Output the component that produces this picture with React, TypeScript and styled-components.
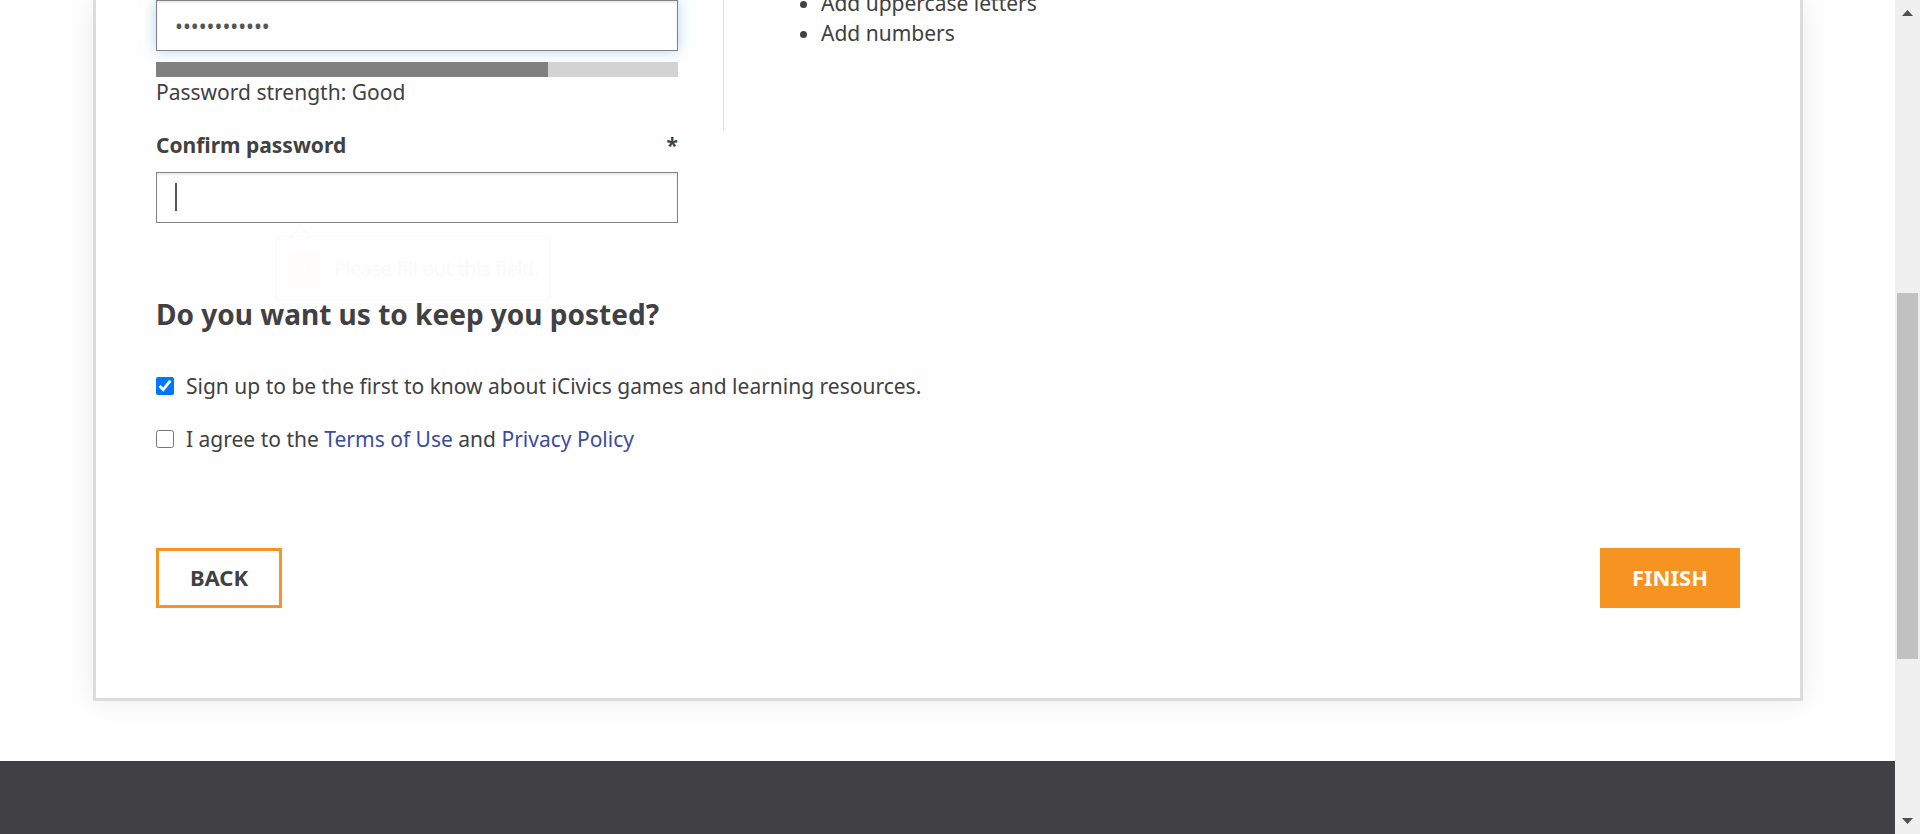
import React, { useState } from "react";
import styled, { createGlobalStyle } from "styled-components";

const GlobalStyle = createGlobalStyle`
  *, *::before, *::after { box-sizing: border-box; }
  body {
    margin: 0;
    overflow: hidden;
    background: #fefefe;
    color: #414042;
    font-family: "Noto Sans", sans-serif;
    font-size: 21px;
    line-height: 30px;
  }
`;

const Shell = styled.div`
  display: flex;
  height: 100vh;
  overflow: hidden;
`;

const Page = styled.div`
  flex: 1;
  min-width: 0;
  display: flex;
  flex-direction: column;
`;

const Card = styled.main`
  margin: 0 92px 60px 93px;
  padding: 0 60px 90px;
  border: 3px solid #dcdcdc;
  border-top: 0;
  background: #fefefe;
  box-shadow: 0 0 24px rgba(0, 0, 0, 0.08);
`;

const Columns = styled.div`
  display: grid;
  grid-template-columns: minmax(0, 522px) 1fr;
  column-gap: 45px;
  align-items: start;
`;

const Tips = styled.aside`
  height: 130px;
  padding-left: 72px;
  border-left: 1px solid #dcdcdc;
`;

const TipList = styled.ul`
  margin: -12px 0 0;
  padding-left: 25px;
`;

const FieldBox = styled.div`
  position: relative;
`;

const TextInput = styled.input<{ $glow?: boolean }>`
  display: block;
  width: 100%;
  height: 51px;
  padding: 0 18px;
  border: 1px solid #808285;
  border-radius: 0;
  outline: 0;
  background: #fefefe;
  color: #555;
  caret-color: transparent;
  font: inherit;
  box-shadow: inset 0 2px 2px rgba(0, 0, 0, 0.08)
    ${(p) => (p.$glow ? ", 0 0 12px rgba(102, 175, 233, 0.5)" : "")};
`;

const Caret = styled.span`
  position: absolute;
  left: 19px;
  top: 11px;
  width: 2px;
  height: 28px;
  background: #555;
`;

const Meter = styled.div`
  height: 15px;
  margin-top: 11px;
  background: #d3d3d3;
`;

const MeterFill = styled.div`
  height: 100%;
  background: #808080;
`;

const FieldLabel = styled.label`
  display: flex;
  justify-content: space-between;
  margin: 23px 0 12px;
  font-weight: 700;
`;

const Bubble = styled.div`
  position: absolute;
  left: 120px;
  top: 64px;
  width: 274px;
  height: 65px;
  display: flex;
  align-items: center;
  gap: 13px;
  padding: 0 12px;
  border: 1px solid #000;
  border-radius: 4px;
  font-size: 19px;
  white-space: nowrap;
  opacity: 0.015;
  &::before {
    content: "";
    position: absolute;
    left: 16px;
    top: -8px;
    width: 15px;
    height: 15px;
    border: solid #000;
    border-width: 1px 0 0 1px;
    transform: rotate(45deg);
  }
`;

const BubbleIcon = styled.span`
  flex: none;
  display: grid;
  place-items: center;
  width: 32px;
  height: 38px;
  background: #ffd800;
  color: #fff;
  font-weight: 700;
`;

const Heading = styled.h2`
  margin: 73px 0 39px;
  font-size: 28px;
  line-height: 36px;
  font-weight: 700;
`;

const CheckRow = styled.div`
  display: flex;
  align-items: center;
  gap: 12px;
  margin-bottom: 23px;
`;

const CheckBox = styled.input`
  width: 18px;
  height: 18px;
  margin: 0;
  accent-color: #0075ff;
`;

const TextLink = styled.a`
  color: #3c4c9b;
  text-decoration: none;
`;

const Actions = styled.div`
  display: flex;
  justify-content: space-between;
  margin-top: 94px;
`;

const ActionButton = styled.button<{ $primary?: boolean }>`
  min-width: ${(p) => (p.$primary ? 140 : 126)}px;
  height: 60px;
  padding: 0 28px 2px;
  border: 3px solid #f79320;
  border-radius: 0;
  background: ${(p) => (p.$primary ? "#f79320" : "#fefefe")};
  color: ${(p) => (p.$primary ? "#fff" : "#414042")};
  font: 700 22px/30px "Noto Sans", sans-serif;
`;

const Footer = styled.footer`
  flex: 1;
  background: #414042;
`;

const ScrollTrack = styled.div`
  width: 25px;
  height: 100vh;
  padding: 10px 2px;
  display: flex;
  flex-direction: column;
  align-items: center;
  background: #f0f0f0;
`;

const ScrollThumb = styled.div`
  width: 21px;
  background: #c1c1c1;
`;

const Arrow = ({ down }: { down?: boolean }) => (
  <svg width="11" height="6" viewBox="0 0 11 6" aria-hidden="true">
    <path d={down ? "M0 0H11L5.5 6Z" : "M0 6H11L5.5 0Z"} fill="#505050" />
  </svg>
);

const Rail = styled.div`
  flex: 1;
  display: grid;
  grid-template-rows: 277fr 366fr 159fr;
  & > :first-child {
    grid-row: 2;
  }
`;

export default function App() {
  const [news, setNews] = useState(true);
  const [agree, setAgree] = useState(false);
  const strength = 75;

  return (
    <>
      <GlobalStyle />
      <Shell>
        <Page>
          <Card>
            <Columns>
              <div>
                <TextInput type="password" aria-label="Password" defaultValue="Civics2024ab" $glow />
                <Meter>
                  <MeterFill style={{ width: `${strength}%` }} />
                </Meter>
                <div>Password strength: Good</div>
                <FieldLabel htmlFor="confirm">
                  <span>Confirm password</span>
                  <span>*</span>
                </FieldLabel>
                <FieldBox>
                  <TextInput id="confirm" type="password" />
                  <Caret />
                  <Bubble>
                    <BubbleIcon>!</BubbleIcon>
                    Please fill out this field.
                  </Bubble>
                </FieldBox>
              </div>
              <Tips>
                <TipList>
                  <li>Add uppercase letters</li>
                  <li>Add numbers</li>
                </TipList>
              </Tips>
            </Columns>
            <Heading>Do you want us to keep you posted?</Heading>
            <CheckRow>
              <CheckBox id="news" type="checkbox" checked={news} onChange={() => setNews(!news)} />
              <label htmlFor="news">
                Sign up to be the first to know about iCivics games and learning resources.
              </label>
            </CheckRow>
            <CheckRow>
              <CheckBox id="agree" type="checkbox" checked={agree} onChange={() => setAgree(!agree)} />
              <label htmlFor="agree">
                I agree to the <TextLink href="#terms">Terms of Use</TextLink> and{" "}
                <TextLink href="#privacy">Privacy Policy</TextLink>
              </label>
            </CheckRow>
            <Actions>
              <ActionButton type="button">BACK</ActionButton>
              <ActionButton type="submit" $primary>
                FINISH
              </ActionButton>
            </Actions>
          </Card>
          <Footer />
        </Page>
        <ScrollTrack>
          <Arrow />
          <Rail>
            <ScrollThumb />
          </Rail>
          <Arrow down />
        </ScrollTrack>
      </Shell>
    </>
  );
}
